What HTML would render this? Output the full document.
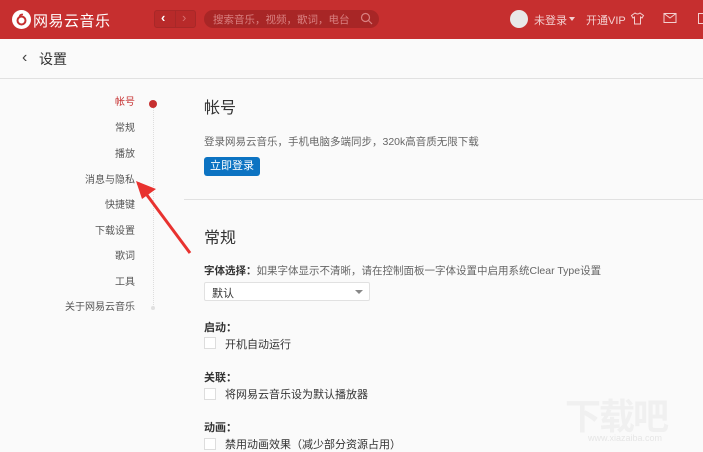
<!DOCTYPE html>
<html><head><meta charset="utf-8"><style>
*{margin:0;padding:0;box-sizing:border-box}
body{width:703px;height:449px;overflow:hidden;background:#fafafa;font-family:"Liberation Sans","Noto Sans CJK SC",sans-serif;position:relative;color:#333}
.a{position:absolute;white-space:nowrap}
.hd{position:absolute;left:0;top:0;width:703px;height:39px;background:#c62f2f}
.sub{position:absolute;left:0;top:39px;width:703px;height:40px;background:#fafafa;border-bottom:1px solid #e1e1e1}
.nav{position:absolute;right:568px;font-size:10px;color:#555;line-height:14px}
.cb{position:absolute;left:204px;width:12px;height:12px;border:1px solid #ddd;background:#fff}
.lb{font-size:11px;color:#333}
</style></head><body>
<div class="hd"></div>
<svg class="a" style="left:12px;top:10px" width="19" height="19" viewBox="0 0 19 19"><circle cx="9.5" cy="9.5" r="9.5" fill="#fff"/><circle cx="9.5" cy="10.5" r="4" fill="none" stroke="#c62f2f" stroke-width="2"/><path d="M11 4.5 Q8 4 7.5 7" fill="none" stroke="#c62f2f" stroke-width="1.6"/></svg>
<div class="a" style="left:33px;top:10px;font-size:15px;color:#fff;letter-spacing:0.5px">网易云音乐</div>
<div class="a" style="left:154px;top:10px;width:42px;height:18px;border:1px solid #a82828;border-radius:3px;background:#b82a2a"></div>
<div class="a" style="left:175px;top:10px;width:1px;height:18px;background:#a82828"></div>
<div class="a" style="left:161px;top:10px;font-size:13px;color:#fff;font-weight:bold">‹</div>
<div class="a" style="left:182px;top:10px;font-size:13px;color:#d87070">›</div>
<div class="a" style="left:204px;top:10px;width:175px;height:18px;border-radius:9px;background:#a82626"></div>
<div class="a" style="left:213px;top:12px;font-size:10.5px;color:#d98080">搜索音乐，视频，歌词，电台</div>
<svg class="a" style="left:360px;top:12px" width="13" height="13" viewBox="0 0 13 13"><circle cx="5.5" cy="5.5" r="4" fill="none" stroke="#d98080" stroke-width="1.2"/><path d="M8.5 8.5L12 12" stroke="#d98080" stroke-width="1.2"/></svg>
<div class="a" style="left:510px;top:10px;width:18px;height:18px;border-radius:50%;background:#e8e8e8"></div>
<div class="a" style="left:534px;top:12px;font-size:11px;color:#f3d0d0">未登录</div>
<div class="a" style="left:569px;top:17px;width:0;height:0;border:3.5px solid transparent;border-top:4px solid #f3d0d0"></div>
<div class="a" style="left:586px;top:12px;font-size:11px;color:#f3d0d0">开通VIP</div>
<svg class="a" style="left:630px;top:11px" width="15" height="15" viewBox="0 0 15 15"><path d="M5 2L1.5 4.5 3 7 4.5 6V13H10.5V6L12 7 13.5 4.5 10 2Q7.5 4 5 2Z" fill="none" stroke="#f3d0d0" stroke-width="1"/></svg>
<svg class="a" style="left:663px;top:12px" width="15" height="12" viewBox="0 0 15 12"><rect x="1" y="1.5" width="12" height="9" fill="none" stroke="#f3d0d0"/><path d="M1 1.5L7 6 13 1.5" fill="none" stroke="#f3d0d0"/></svg>
<div class="a" style="left:698px;top:13px;width:8px;height:11px;border:1.5px solid #f3d0d0"></div>
<div class="sub"></div>
<div class="a" style="left:22px;top:49px;font-size:16px;color:#444">‹</div>
<div class="a" style="left:39px;top:49px;font-size:14px;color:#333">设置</div>
<div class="a" style="left:153px;top:104px;height:205px;border-left:1px dotted #ddd"></div>
<div class="a" style="left:149px;top:100px;width:8px;height:8px;border-radius:50%;background:#c62f2f"></div>
<div class="a" style="left:151px;top:306px;width:4px;height:4px;border-radius:50%;background:#e0e0e0"></div>
<div class="nav" style="top:96px;color:#c62f2f">帐号</div>
<div class="nav" style="top:122px">常规</div>
<div class="nav" style="top:148px">播放</div>
<div class="nav" style="top:174px">消息与隐私</div>
<div class="nav" style="top:199px">快捷键</div>
<div class="nav" style="top:225px">下载设置</div>
<div class="nav" style="top:250px">歌词</div>
<div class="nav" style="top:276px">工具</div>
<div class="nav" style="top:301px">关于网易云音乐</div>
<div class="a" style="left:204px;top:94px;font-size:16px;color:#333">帐号</div>
<div class="a" style="left:204px;top:134px;font-size:10.5px;color:#666">登录网易云音乐，手机电脑多端同步，320k高音质无限下载</div>
<div class="a" style="left:204px;top:157px;width:56px;height:19px;background:#0c73c2;border-radius:3px;color:#fff;font-size:11px;line-height:19px;text-align:center">立即登录</div>
<div class="a" style="left:184px;top:199px;width:519px;height:1px;background:#e1e1e1"></div>
<div class="a" style="left:204px;top:224px;font-size:16px;color:#333">常规</div>
<div class="a lb" style="left:204px;top:263px;font-size:10.5px"><b>字体选择：</b><span style="color:#666">如果字体显示不清晰，请在控制面板一字体设置中启用系统Clear Type设置</span></div>
<div class="a" style="left:204px;top:282px;width:166px;height:19px;border:1px solid #e1e1e1;background:#fff;border-radius:2px"></div>
<div class="a" style="left:212px;top:285px;font-size:11px">默认</div>
<div class="a" style="left:355px;top:290px;border:4px solid transparent;border-top:4px solid #888"></div>
<div class="a lb" style="left:204px;top:319px;font-weight:bold">启动：</div>
<div class="cb" style="top:337px"></div><div class="a lb" style="left:225px;top:336px">开机自动运行</div>
<div class="a lb" style="left:204px;top:369px;font-weight:bold">关联：</div>
<div class="cb" style="top:388px"></div><div class="a lb" style="left:225px;top:386px">将网易云音乐设为默认播放器</div>
<div class="a lb" style="left:204px;top:419px;font-weight:bold">动画：</div>
<div class="cb" style="top:438px"></div><div class="a lb" style="left:225px;top:436px">禁用动画效果（减少部分资源占用）</div>
<svg class="a" style="left:130px;top:175px" width="70" height="85" viewBox="0 0 70 85"><path d="M8 8L60 78" stroke="#e8322f" stroke-width="3"/><path d="M6 6L26 14 12 24Z" fill="#e8322f"/></svg>
<div class="a" style="left:565px;top:388px;font-size:36px;color:#f0f0f0;font-weight:bold;letter-spacing:-2px">下载吧</div>
<div class="a" style="left:588px;top:433px;font-size:9px;color:#e6e6e6">www.xiazaiba.com</div>
</body></html>
